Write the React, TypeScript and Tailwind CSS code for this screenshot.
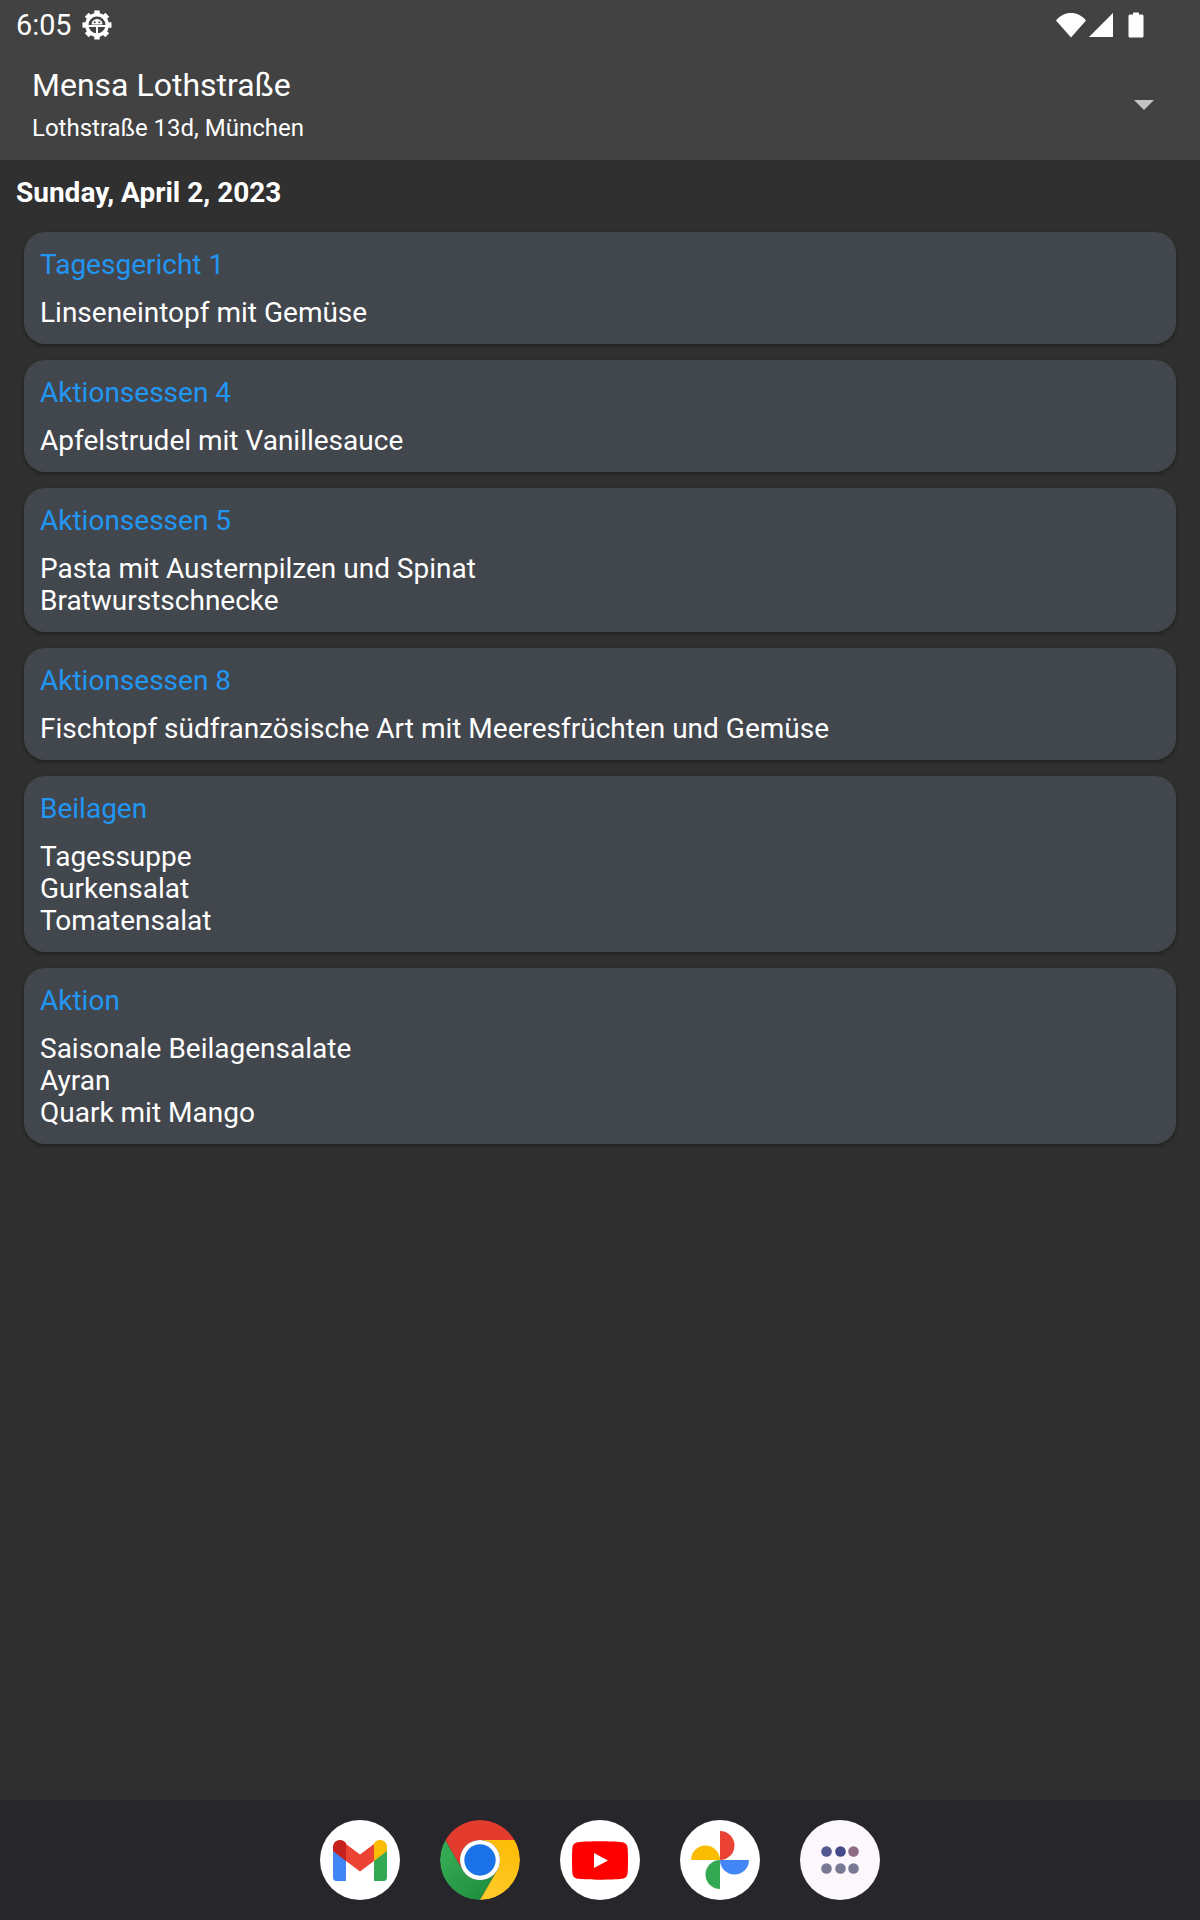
const menu = [
  { title: "Tagesgericht 1", items: ["Linseneintopf mit Gemüse"] },
  { title: "Aktionsessen 4", items: ["Apfelstrudel mit Vanillesauce"] },
  { title: "Aktionsessen 5", items: ["Pasta mit Austernpilzen und Spinat", "Bratwurstschnecke"] },
  { title: "Aktionsessen 8", items: ["Fischtopf südfranzösische Art mit Meeresfrüchten und Gemüse"] },
  { title: "Beilagen", items: ["Tagessuppe", "Gurkensalat", "Tomatensalat"] },
  { title: "Aktion", items: ["Saisonale Beilagensalate", "Ayran", "Quark mit Mango"] },
];

function GearIcon() {
  const teeth = [0, 45, 90, 135, 180, 225, 270, 315];
  return (
    <svg width="30" height="30" viewBox="0 0 30 30" fill="none">
      {teeth.map((a) => (
        <rect key={a} x="12.300" y="0.500" width="5.400" height="5" fill="white" transform={`rotate(${a} 15 15)`} />
      ))}
      <circle cx="15" cy="15" r="10.200" stroke="white" strokeWidth="3.400" />
      <path d="M6 16h18" stroke="white" strokeWidth="2" />
      <path d="M15 16v9" stroke="white" strokeWidth="2" />
      <path d="M9.500 14.500a5.500 5.500 0 0 1 11 0z" fill="white" />
      <circle cx="12.700" cy="12.300" r="1" fill="#424242" />
      <circle cx="17.300" cy="12.300" r="1" fill="#424242" />
    </svg>
  );
}

function StatusIcons() {
  return (
    <div className="flex items-center">
      <svg width="32" height="26" viewBox="0 0 32 26" className="mr-[1px]">
        <path d="M1 8.500C5 3.500 10 1 16 1s11 2.500 15 7.500L16 25.500z" fill="white" />
      </svg>
      <svg width="26" height="26" viewBox="0 0 26 26" className="mr-[14px]">
        <path d="M1 25L25 1v24z" fill="white" />
      </svg>
      <svg width="16" height="26" viewBox="0 0 16 26">
        <path d="M5 2.500V1a.5.5 0 0 1 .5-.5h5a.5.5 0 0 1 .5.5v1.500h3a1.500 1.500 0 0 1 1.500 1.500v20a1.500 1.500 0 0 1-1.500 1.500H2A1.500 1.500 0 0 1 .5 24V4A1.500 1.500 0 0 1 2 2.500z" fill="white" />
      </svg>
    </div>
  );
}

function DockIcon({ children, bg = "bg-white" }: { children: React.ReactNode; bg?: string }) {
  return <div className={`flex h-20 w-20 items-center justify-center overflow-hidden rounded-full ${bg}`}>{children}</div>;
}

function Gmail() {
  return (
    <svg width="54" height="41" viewBox="0 0 54 41">
      <path d="M0 10.500V37.500A3.500 3.500 0 0 0 3.500 41H13V20z" fill="#4285F4" />
      <path d="M54 10.500V37.500A3.500 3.500 0 0 1 50.500 41H41V20z" fill="#34A853" />
      <path d="M13 4v17l14 10.500L41 21V4L27 14.500z" fill="#EA4335" />
      <path d="M0 7C0 .8 7-1.700 11 1.300L13 3v18L0 11z" fill="#C5221F" />
      <path d="M54 7C54 .8 47-1.700 43 1.300L41 3v18l13-10z" fill="#FBBC04" />
    </svg>
  );
}

function Chrome() {
  return (
    <svg width="80" height="80" viewBox="0 0 80 80">
      <defs>
        <linearGradient id="chromeGreen" x1="0.200" y1="0.200" x2="0.800" y2="1">
          <stop offset="0" stopColor="#34A853" />
          <stop offset="1" stopColor="#1E8E3E" />
        </linearGradient>
        <linearGradient id="chromeYellow" x1="0.700" y1="0" x2="0.400" y2="1">
          <stop offset="0" stopColor="#FDBC05" />
          <stop offset="1" stopColor="#FFCA2B" />
        </linearGradient>
      </defs>
      <path d="M5.360 20L22.680 50A20 20 0 0 0 57.320 50L40 80A40 40 0 0 1 5.360 20z" fill="url(#chromeGreen)" />
      <path d="M40 0a40 40 0 0 1 34.640 20H40a20 20 0 0 0-17.320 30L5.360 20A40 40 0 0 1 40 0z" fill="#E33B2E" />
      <path d="M40 20h34.640A40 40 0 0 1 40 80l17.320-30A20 20 0 0 0 40 20z" fill="url(#chromeYellow)" />
      <circle cx="40" cy="40" r="20" fill="white" />
      <circle cx="40" cy="40" r="15.700" fill="#1A73E8" />
    </svg>
  );
}

function YouTube() {
  return (
    <svg width="56" height="39" viewBox="0 0 56 39">
      <path d="M6 1.200C16 0 40 0 50 1.200 54 1.700 55.500 4 55.700 8c.4 7 .4 16 0 23-.2 4-1.700 6.300-5.700 6.800C40 39 16 39 6 37.800 2 37.300.5 35 .3 31c-.4-7-.4-16 0-23C.5 4 2 1.700 6 1.200z" fill="#FF0000" />
      <path d="M22 12v15l14-7.500z" fill="white" />
    </svg>
  );
}

function Photos() {
  return (
    <svg width="58" height="58" viewBox="0 0 58 58">
      <path d="M29 29V0a14.500 14.500 0 0 1 0 29z" fill="#EA4335" />
      <path d="M29 29h29a14.500 14.500 0 0 1-29 0z" fill="#4285F4" />
      <path d="M29 29v29a14.500 14.500 0 0 1 0-29z" fill="#34A853" />
      <path d="M29 29H0a14.500 14.500 0 0 1 29 0z" fill="#FBBC04" />
    </svg>
  );
}

function AppsGrid() {
  const colors = ["#52598F", "#444A87", "#8E6A85", "#777A92", "#777A92", "#777A92"];
  return (
    <div className="grid grid-cols-3 gap-x-[2.500px] gap-y-[5.500px]">
      {colors.map((c, i) => (
        <svg key={i} width="11" height="11" viewBox="0 0 11 11" className="block">
          <circle cx="5.500" cy="5.500" r="5.300" fill={c} />
        </svg>
      ))}
    </div>
  );
}

export default function App() {
  return (
    <div className="flex h-[1920px] w-[1200px] flex-col overflow-hidden bg-[#303030] font-['Roboto',sans-serif] text-white">
      <header className="flex h-40 shrink-0 flex-col bg-[#424242]">
        <div className="flex h-[50px] shrink-0 items-center justify-between pl-4 pr-[56px]">
          <div className="flex items-center gap-[10px]">
            <span className="text-[28.800px] leading-[50px]">6:05</span>
            <GearIcon />
          </div>
          <StatusIcons />
        </div>
        <div className="flex flex-1 items-center justify-between pl-8 pr-[46px]">
          <div>
            <div className="text-[32px] leading-[38px]">Mensa Lothstraße</div>
            <div className="mt-[8px] text-[24px] leading-[32px]">Lothstraße 13d, München</div>
          </div>
          <div className="h-0 w-0 border-x-[10px] border-t-[10px] border-x-transparent border-t-[#c4c4c4]" />
        </div>
      </header>
      <main className="flex-1 overflow-hidden">
        <h2 className="px-4 pt-[17px] text-[28px] font-bold leading-8">Sunday, April 2, 2023</h2>
        <div className="mt-[23px] flex flex-col gap-4 px-6">
          {menu.map((m) => (
            <section key={m.title} className="rounded-[21px] bg-[#42464d] px-4 pb-[15px] pt-[17px] shadow-[0_2px_4px_rgba(0,0,0,0.35)]">
              <div className="text-[28px] leading-8 text-[#2196f3]">{m.title}</div>
              <div className="mt-[16px]">
                {m.items.map((t) => (
                  <div key={t} className="text-[28px] leading-8">{t}</div>
                ))}
              </div>
            </section>
          ))}
        </div>
      </main>
      <footer className="flex h-[120px] shrink-0 items-center justify-center gap-10 bg-[#26262b]">
        <DockIcon><Gmail /></DockIcon>
        <DockIcon bg="bg-transparent"><Chrome /></DockIcon>
        <DockIcon><YouTube /></DockIcon>
        <DockIcon><Photos /></DockIcon>
        <DockIcon bg="bg-[#fbf7fd]"><AppsGrid /></DockIcon>
      </footer>
    </div>
  );
}
